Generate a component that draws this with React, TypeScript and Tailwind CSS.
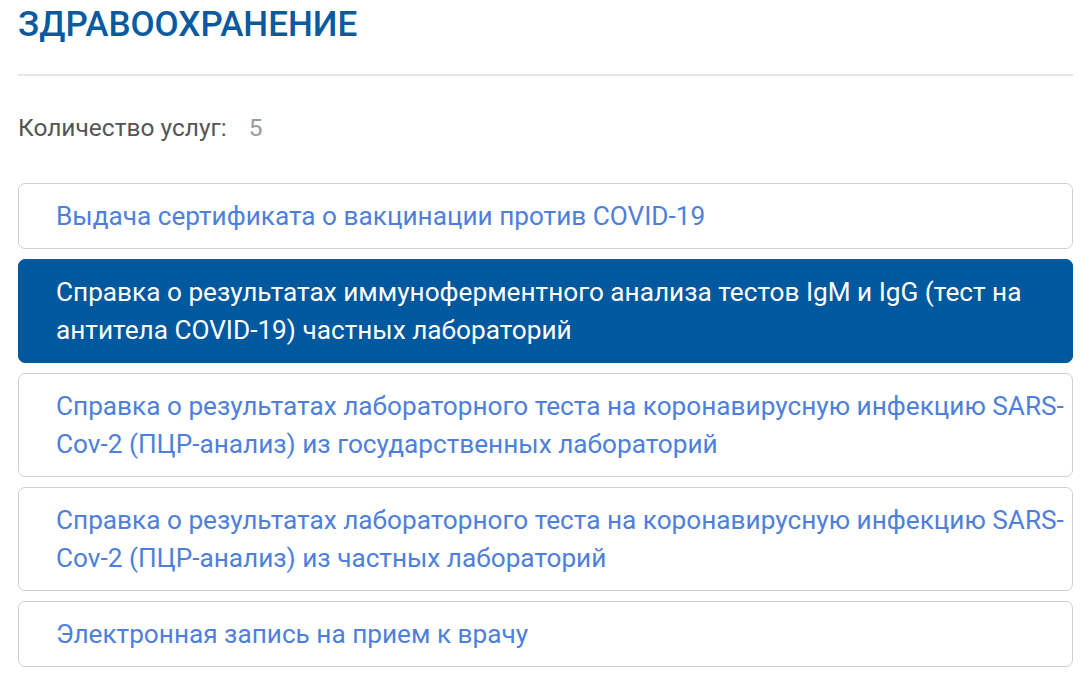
import React from "react";

const items = [
  "Выдача сертификата о вакцинации против COVID-19",
  "Справка о результатах иммуноферментного анализа тестов IgM и IgG (тест на антитела COVID-19) частных лабораторий",
  "Справка о результатах лабораторного теста на коронавирусную инфекцию SARS-Cov-2 (ПЦР-анализ) из государственных лабораторий",
  "Справка о результатах лабораторного теста на коронавирусную инфекцию SARS-Cov-2 (ПЦР-анализ) из частных лабораторий",
  "Электронная запись на прием к врачу",
];

export default function App() {
  return (
    <div
      className="w-[1084px] h-[686px] bg-white overflow-hidden"
      style={{ fontFamily: "Roboto, 'Liberation Sans', sans-serif" }}
    >
      <div className="pl-[18px] pr-[11px]">
        <h1 className="pt-[3px] text-[35px] leading-[44px] font-medium text-[#0a5aa0]">
          ЗДРАВООХРАНЕНИЕ
        </h1>
        <div className="mt-[27px] h-[2px] bg-[#e6e6e6]" />
        <div className="mt-[38px] flex items-center text-[24.5px] leading-[28px]">
          <span className="text-[#555555]">Количество услуг:</span>
          <span className="ml-[22px] text-[#9a9a9a]">5</span>
        </div>
        <div className="mt-[41px] flex flex-col gap-[10px]">
          {items.map((t, i) => {
            const active = i === 1;
            return (
              <div
                key={i}
                className={
                  active
                    ? "rounded-[7px] border border-[#00589f] bg-[#00589f] pl-[37px] pr-[8px] py-[13px] text-[26.2px] leading-[38px] text-white"
                    : "rounded-[7px] border border-[#cfcfcf] bg-white pl-[37px] pr-[8px] py-[13px] text-[26.2px] leading-[38px] text-[#4f7fdc]"
                }
              >
                {t}
              </div>
            );
          })}
        </div>
      </div>
    </div>
  );
}
